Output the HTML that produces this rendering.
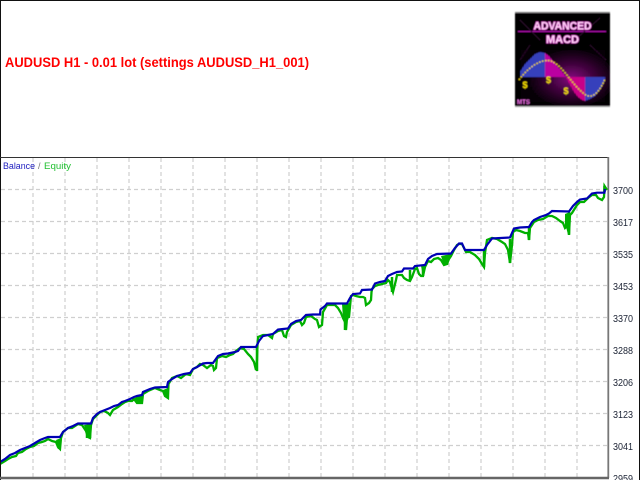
<!DOCTYPE html>
<html>
<head>
<meta charset="utf-8">
<style>
html,body{margin:0;padding:0;background:#fff;width:640px;height:480px;overflow:hidden}
svg{display:block}
</style>
</head>
<body>
<svg width="640" height="480" viewBox="0 0 640 480" xmlns="http://www.w3.org/2000/svg">
<defs>
<radialGradient id="glow" cx="55%" cy="50%" r="50%"><stop offset="0" stop-color="#a00c98"/><stop offset=".5" stop-color="#4a0646"/><stop offset="1" stop-color="#060006"/></radialGradient>
<filter id="b" x="-5%" y="-5%" width="110%" height="110%"><feGaussianBlur stdDeviation="0.4"/></filter>
<filter id="b2" x="-5%" y="-5%" width="110%" height="110%"><feGaussianBlur stdDeviation="0.3"/></filter>
<clipPath id="chart"><rect x="1" y="158" width="607" height="319"/></clipPath>
</defs>
<rect width="640" height="480" fill="#fff"/>
<path d="M0 .5H640M.5 0V480M639.5 0V480" stroke="#111" fill="none"/>

<g filter="url(#b2)">
<text x="5" y="67" font-family="'Liberation Sans',sans-serif" font-weight="700" font-size="14" fill="#f00" textLength="304" lengthAdjust="spacingAndGlyphs">AUDUSD H1 - 0.01 lot (settings AUDUSD_H1_001)</text>
</g>

<!-- grid -->
<g stroke="#cfcfcf" stroke-width="1.2" stroke-dasharray="4 3" fill="none">
<path d="M1 189.5H608M1 221.5H608M1 253.5H608M1 285.5H608M1 317.5H608M1 349.5H608M1 381.5H608M1 413.5H608M1 445.5H608"/>
<path d="M33 158V477M65 158V477M97 158V477M129 158V477M161 158V477M193 158V477M225 158V477M257 158V477M289 158V477M321 158V477M353 158V477M385 158V477M417 158V477M449 158V477M481 158V477M513 158V477M545 158V477M577 158V477"/>
</g>

<!-- frame -->
<path d="M0 157.5H609" stroke="#333"/>
<path d="M608.3 157V478" stroke="#777" stroke-width="1.8"/>
<path d="M0 478H609" stroke="#666" stroke-width="2.4"/>

<g filter="url(#b2)">
<text x="3" y="169" font-family="'Liberation Sans',sans-serif" font-size="9" fill="#2020c0" textLength="32" lengthAdjust="spacingAndGlyphs">Balance</text>
<text x="38" y="169" font-family="'Liberation Sans',sans-serif" font-size="9" fill="#777">/</text>
<text x="44" y="169" font-family="'Liberation Sans',sans-serif" font-size="9" fill="#20c030" textLength="27" lengthAdjust="spacingAndGlyphs">Equity</text>

<g font-family="'Liberation Sans',sans-serif" font-size="10" fill="#1c2434">
<text x="613" y="194" textLength="20" lengthAdjust="spacingAndGlyphs">3700</text>
<text x="613" y="226" textLength="20" lengthAdjust="spacingAndGlyphs">3617</text>
<text x="613" y="258" textLength="20" lengthAdjust="spacingAndGlyphs">3535</text>
<text x="613" y="290" textLength="20" lengthAdjust="spacingAndGlyphs">3453</text>
<text x="613" y="322" textLength="20" lengthAdjust="spacingAndGlyphs">3370</text>
<text x="613" y="354" textLength="20" lengthAdjust="spacingAndGlyphs">3288</text>
<text x="613" y="386" textLength="20" lengthAdjust="spacingAndGlyphs">3206</text>
<text x="613" y="418" textLength="20" lengthAdjust="spacingAndGlyphs">3123</text>
<text x="613" y="450" textLength="20" lengthAdjust="spacingAndGlyphs">3041</text>
<text x="613" y="482" textLength="20" lengthAdjust="spacingAndGlyphs">2959</text>
</g>
</g>

<g clip-path="url(#chart)" filter="url(#b2)">
<!-- equity fill areas (only tight clusters near the spikes) -->
<path fill="#00b000" d="M56 440L58 447L60 449L61 438ZM84 425L86 431L88 437L91 438L91 424ZM137 396L134 399L137 403L142 403L143 394ZM163 390L165 396L168 398L168 388ZM342 304L343 318L345 322L346 330L347 318L349 317L350 303ZM423 276L425 265L421 266ZM441 256L444 265L447 264L449 259L451 254ZM565 214L565 228L567 226L569 235L570 212Z"/>
<!-- equity -->
<path fill="none" stroke="#00b000" stroke-width="2.3" stroke-linejoin="miter" d="M0 464L5 461L8 459L12 457L16 456L18 453L22 452L26 449L30 447L34 446L38 443L42 442L45 441L48 439L52 441L56 442L58 447L60 449L61 438L63 432L68 428L72 428L78 424L82 425L86 431L88 437L90 438L91 425L93 419L97 415L100 412L104 411L108 413L110 415L113 410L118 407L122 404L125 402L128 401L132 401L134 399L137 403L142 403L143 394L148 391L155 388L160 390L163 391L165 396L168 398L168.500 384L172 378L177 376L181 378L186 374L190 375L193 369L197 367L200 364L203 365L207 368L211 365L213 366L214 370L216 368L217 358L222 356L226 357L230 355L233 354L236 351L240 348L244 349L248 354L251 357L254 362L256 370L257 360L257.500 345L258 337L263 335L268 335L272 338L273 334L278 331L282 330L284 336L286 337L287 332L291 325L296 322L300 321L302 325L304 323L306 317L311 316L315 319L317 320L319 327L322 325L323 312L327 305L335 305L338 308L341 313L343 318L345 322L346 330L347 318L349 317L351 296L353 295L356 296L360 297L363 297L365 298L366 305L369 303L371 300L371.500 292L372 289L375 286L378 285L382 284L386 283L388 280L390 282L392 289L393 292L396 280L397 275L402 275L404 278L407 280L410 281L412 277L415 269L417 268L419 274L421 276L423 276L425 267L428 261L431 262L434 259L438 258L441 260L444 265L447 264L449 259L451 256L454 250L457 245L459 244L462 244L464 248L466 252L470 252L475 255L479 259L482 264L484 267L485 253L487 240L492 238L497 239L502 242L505 244L508 250L510 263L512 245L513 232L516 230L520 231L525 233L528 233L529 240L530 228L534 222L538 220L543 219L548 216L552 216L556 218L560 221L563 223L565 228L567 226L569 234L570 215L572 213L577 205L580 202L584 202L588 198L592 195L596 195L598 198L602 200L604 197L604.500 186L607 190"/>
<path fill="none" stroke="#00b000" stroke-width="2.5" d="M59 440V449M87 426V438M90 426V438M140 396V403M257 347V371M345 304V330M347 304V320M392 277V292M410 270V281M423 267V276M447 255V265M484 251V267M510 239V263M529 228V240M569 212V235M604.500 186V192"/>
<!-- balance -->
<path fill="none" stroke="#0000b4" stroke-width="2.2" stroke-linejoin="miter" d="M0 462L5 459L10 455L15 453L20 450L25 448L30 446L35 443L40 440L45 438L48 437L60 437L63 432L68 428L73 426L78 423.500L91 423.500L93 418L97 414L100 412L105 410L110 408L114 406L118 405L122 402L125 401L130 399L134 397L137 396L142 395L143 392L150 389L155 387.500L167 387L168 382L172 379L177 376L184 374L190 373L193 369L197 367L203 363.500L207 363L213 363L218 356L223 354L228 353.500L235 352L238 351L241 347L256 347L259 341L263 336L268 335L273 334L278 329.500L283 329L288 328.500L291 324L296 321L301 320L306 315L313 314.500L320 314.500L320.500 309.500L325 306L327 303.500L347 303.500L350 298L353 294L360 293.500L362 290L372 289.500L375 283.500L380 282L385 281L388 276L392 274L397 272L402 271.500L404 268.500L413 268.500L415 266L425 265L428 259L432 256L437 254L451 253.500L455 248L459 243.500L462 243.500L465 250L484 250L487 245L492 238.500L510 237.500L512 233L514 228.500L520 227.500L529 227L532 222L534 220L540 217L546 215L549 213.500L552 211L569 211.500L573 206L577 202L580 199.500L587 198.500L592 193.500L597 192.700L604.500 192.700L605 189"/>
</g>

<!-- logo -->
<g filter="url(#b)">
<rect x="515" y="12" width="95" height="95" fill="#050005"/>
<rect x="525" y="50" width="85" height="57" fill="url(#glow)"/>
<path d="M515 12.500H610" stroke="#888" stroke-width="1.2"/>
<path d="M515 106.500H610" stroke="#aaa" stroke-width="1.2"/>
<path d="M518 31.500H606" stroke="#b010b0" stroke-width="1"/>
<path d="M520 20L540 40M600 18L570 44M530 45L520 60M590 45L606 60" stroke="#2c0a2c" stroke-width="1" fill="none"/>
<!-- bars -->
<path d="M520.500 77V71L525 64L530 59L535 54L540 52L545 53V77Z" fill="#3c50e0"/>
<path d="M545 77V53L549 56L553 61L558 67L563 73L566 77Z" fill="#e000c0"/>
<path d="M566 77H585V101L582 100L578 97L574 92L570 85Z" fill="#f000a0"/>
<path d="M585 77H605V81L600 90L595 96L590 99L585 101Z" fill="#3c50e0"/>
<g stroke="#200020" stroke-width=".8" opacity=".55"><path d="M522 50V102M524 50V102M526 50V102M528 50V102M530 50V102M532 50V102M534 50V102M536 50V102M538 50V102M540 50V102M542 50V102M544 50V102M546 50V102M548 50V102M550 50V102M552 50V102M554 50V102M556 50V102M558 50V102M560 50V102M562 50V102M564 50V102M566 50V102M568 50V102M570 50V102M572 50V102M574 50V102M576 50V102M578 50V102M580 50V102M582 50V102M584 50V102M586 50V102M588 50V102M590 50V102M592 50V102M594 50V102M596 50V102M598 50V102M600 50V102M602 50V102M604 50V102"/></g>
<path d="M519 80C526 70 538 60 548 60.500C560 61 570 82 582 92C588 98 596 100 605 79" fill="none" stroke="#f5d800" stroke-width="1.4" stroke-dasharray="1.6 1.4"/>
<g font-family="'Liberation Sans',sans-serif" font-weight="700" font-size="9" fill="#ffe600">
<text x="522.500" y="88">$</text><text x="546" y="83">$</text><text x="563.500" y="94">$</text>
</g>
<g font-family="'Liberation Sans',sans-serif" font-weight="700" fill="#ffd8f8" stroke="#d000c0" stroke-width="1" paint-order="stroke">
<text x="533.500" y="29.500" font-size="11" textLength="58" lengthAdjust="spacingAndGlyphs">ADVANCED</text>
<text x="546" y="43" font-size="11" textLength="33" lengthAdjust="spacingAndGlyphs">MACD</text>
</g>
<text x="517" y="104" font-family="'Liberation Sans',sans-serif" font-weight="700" font-size="6" fill="#f070e8" textLength="13" lengthAdjust="spacingAndGlyphs">MTS</text>
</g>
</svg>
</body>
</html>
